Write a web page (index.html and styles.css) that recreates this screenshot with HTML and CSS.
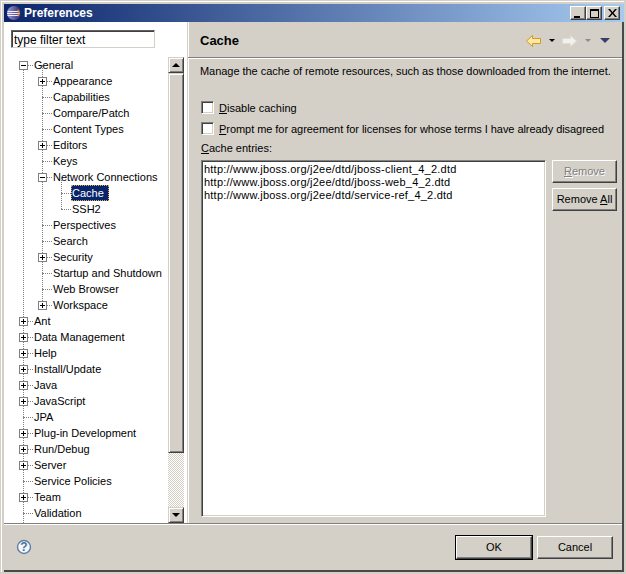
FILE: index.html
```html
<!DOCTYPE html>
<html lang="en">
<head>
    <meta charset="UTF-8">
    <meta name="viewport" content="width=device-width, initial-scale=1.0">
    <title>Preferences</title>
    <link rel="stylesheet" href="styles.css">
</head>
<body>
<div class="window">
    <!-- Title bar -->
    <div class="titlebar">
        <svg class="app-icon" width="16" height="16" viewBox="0 0 16 16">
            <defs>
                <linearGradient id="sphere" x1="0" y1="0" x2="1" y2="0">
                    <stop offset="0" stop-color="#9a98d8"/>
                    <stop offset="1" stop-color="#2a2868"/>
                </linearGradient>
            </defs>
            <circle cx="8" cy="8" r="7" fill="url(#sphere)"/>
            <path d="M1.500 6h11v1h-11zM1 8h12.500v1H1zM1.500 10h11v1h-11z" fill="#f2eefa"/>
            <path d="M13 4.500a7 7 0 0 1 0 7l-2-.5a7 7 0 0 0 0-6z" fill="#f3a53a" opacity=".6"/>
        </svg>
        <span class="titlebar-text">Preferences</span>
        <div class="win-buttons">
            <button class="win-btn"><span class="glyph-min"></span></button>
            <button class="win-btn"><span class="glyph-max"></span></button>
            <button class="win-btn win-close">
                <svg width="9" height="8" viewBox="0 0 9 8"><path d="M0 0h2l2.500 3L7 0h2L5.500 4 9 8H7L4.500 5 2 8H0l3.500-4z" fill="#000"/></svg>
            </button>
        </div>
    </div>

    <div class="panel">
        <div class="main">
            <!-- Left side with the filter and tree -->
            <div class="sidebar">
                <div class="filter-box">type filter text</div>
                <div class="tree-wrap">
                    <div class="tree-clip">
                        <ul class="tree tree-root">
                            <li><div class="row"><span class="box minus"></span><span class="item">General</span></div>
                                <ul class="tree tree-sub">
                                    <li><div class="row"><span class="box plus"></span><span class="item">Appearance</span></div></li>
                                    <li><div class="row"><span class="item">Capabilities</span></div></li>
                                    <li><div class="row"><span class="item">Compare/Patch</span></div></li>
                                    <li><div class="row"><span class="item">Content Types</span></div></li>
                                    <li><div class="row"><span class="box plus"></span><span class="item">Editors</span></div></li>
                                    <li><div class="row"><span class="item">Keys</span></div></li>
                                    <li><div class="row"><span class="box minus"></span><span class="item">Network Connections</span></div>
                                        <ul class="tree tree-sub">
                                            <li><div class="row"><span class="item selected">Cache</span></div></li>
                                            <li><div class="row"><span class="item">SSH2</span></div></li>
                                        </ul>
                                    </li>
                                    <li><div class="row"><span class="item">Perspectives</span></div></li>
                                    <li><div class="row"><span class="item">Search</span></div></li>
                                    <li><div class="row"><span class="box plus"></span><span class="item">Security</span></div></li>
                                    <li><div class="row"><span class="item">Startup and Shutdown</span></div></li>
                                    <li><div class="row"><span class="item">Web Browser</span></div></li>
                                    <li><div class="row"><span class="box plus"></span><span class="item">Workspace</span></div></li>
                                </ul>
                            </li>
                            <li><div class="row"><span class="box plus"></span><span class="item">Ant</span></div></li>
                            <li><div class="row"><span class="box plus"></span><span class="item">Data Management</span></div></li>
                            <li><div class="row"><span class="box plus"></span><span class="item">Help</span></div></li>
                            <li><div class="row"><span class="box plus"></span><span class="item">Install/Update</span></div></li>
                            <li><div class="row"><span class="box plus"></span><span class="item">Java</span></div></li>
                            <li><div class="row"><span class="box plus"></span><span class="item">JavaScript</span></div></li>
                            <li><div class="row"><span class="item">JPA</span></div></li>
                            <li><div class="row"><span class="box plus"></span><span class="item">Plug-in Development</span></div></li>
                            <li><div class="row"><span class="box plus"></span><span class="item">Run/Debug</span></div></li>
                            <li><div class="row"><span class="box plus"></span><span class="item">Server</span></div></li>
                            <li><div class="row"><span class="item">Service Policies</span></div></li>
                            <li><div class="row"><span class="box plus"></span><span class="item">Team</span></div></li>
                            <li><div class="row"><span class="item">Validation</span></div></li>
                        </ul>
                    </div>
                    <div class="scrollbar">
                        <div class="scroll-btn"><span class="arrow-up"></span></div>
                        <div class="scroll-thumb"></div>
                        <div class="scroll-track"></div>
                        <div class="scroll-btn"><span class="arrow-down"></span></div>
                    </div>
                </div>
            </div>

            <!-- Right side -->
            <div class="content">
                <div class="content-head">
                    <h1>Cache</h1>
                    <div class="nav-icons">
                        <svg width="15" height="12" viewBox="0 0 15 12"><path d="M.5 6 6.500.5v3h8v5h-8v3z" fill="#fde9a6" stroke="#d39a1c"/></svg>
                        <span class="drop drop-black"></span>
                        <svg width="15" height="12" viewBox="0 0 15 12"><path d="M14.500 6 8.500.5v3h-8v5h8v3z" fill="#f2f1ec" stroke="#dedcd5"/></svg>
                        <span class="drop drop-grey"></span>
                        <span class="drop-menu"></span>
                    </div>
                </div>
                <div class="content-body">
                    <p class="desc">Manage the cache of remote resources, such as those downloaded from the internet.</p>
                    <label class="check first"><span class="checkbox"></span><span><u>D</u>isable caching</span></label>
                    <label class="check"><span class="checkbox"></span><span class="check-long"><u>P</u>rompt me for agreement for licenses for whose terms I have already disagreed</span></label>
                    <div class="entries-label"><u>C</u>ache entries:</div>
                    <div class="entries">
                        <div class="listbox">
                            <div>http://www.jboss.org/j2ee/dtd/jboss-client_4_2.dtd</div>
                            <div>http://www.jboss.org/j2ee/dtd/jboss-web_4_2.dtd</div>
                            <div>http://www.jboss.org/j2ee/dtd/service-ref_4_2.dtd</div>
                        </div>
                        <div class="side-buttons">
                            <button class="btn disabled"><u>R</u>emove</button>
                            <button class="btn">Remove <u>A</u>ll</button>
                        </div>
                    </div>
                </div>
            </div>
        </div>

        <!-- Bottom bar -->
        <div class="footer">
            <svg class="help" width="16" height="16" viewBox="0 0 16 16">
                <circle cx="8" cy="8" r="6.500" fill="#f4f7fb" stroke="#5f7fa8" stroke-width="1.400"/>
                <text x="8" y="12" text-anchor="middle" class="help-q">?</text>
            </svg>
            <div class="footer-buttons">
                <button class="btn big default">OK</button>
                <button class="btn big">Cancel</button>
            </div>
        </div>
    </div>
</div>
</body>
</html>
```

FILE: styles.css
```css
* {
    box-sizing: border-box;
}
html, body {
    margin: 0;
    height: 100%;
}
body {
    font-family: "Liberation Sans", Arial, sans-serif;
    font-size: 11px;
    color: #000;
    background-color: #d4d0c8;
}
u {
    text-decoration: underline;
}

/* Window frame */
.window {
    width: 624px;
    height: 572px;
    display: flex;
    flex-direction: column;
    padding: 3px 0 0 3px;
    background-color: #d4d0c8;
    border-top: 1px solid #d4d0c8;
    border-left: 1px solid #d4d0c8;
    box-shadow: inset 1px 1px 0 #fff;
}
.titlebar {
    height: 18px;
    flex: none;
    display: flex;
    align-items: center;
    padding: 0 4px 0 2px;
    background: linear-gradient(to right, #0a246a, #a6caf0);
    color: #fff;
}
.app-icon {
    margin-right: 2px;
}
.titlebar-text {
    font-family: "Liberation Sans", Arial, sans-serif;
    font-weight: bold;
    font-size: 12px;
}
.win-buttons {
    margin-left: auto;
    display: flex;
}
.win-btn {
    width: 16px;
    height: 14px;
    padding: 0;
    display: flex;
    align-items: center;
    justify-content: center;
    background-color: #d4d0c8;
    border: 1px solid;
    border-color: #fff #404040 #404040 #fff;
    box-shadow: inset -1px -1px 0 #808080;
}
.win-close {
    margin-left: 2px;
}
.glyph-min {
    width: 6px;
    height: 2px;
    background-color: #000;
    margin-top: 7px;
    margin-right: 2px;
}
.glyph-max {
    width: 9px;
    height: 9px;
    border: 1px solid #000;
    border-top-width: 2px;
}

/* Everything under the title bar, dark edge right and bottom */
.panel {
    flex: 1;
    min-height: 0;
    display: flex;
    flex-direction: column;
    border-right: 2px solid #484848;
    border-bottom: 2px solid #484848;
}
.main {
    flex: 1;
    display: flex;
    min-height: 0;
    border-bottom: 1px solid #808080;
    box-shadow: 0 1px 0 #fff;
}

/* Left side */
.sidebar {
    width: 183px;
    flex: none;
    display: flex;
    flex-direction: column;
    background-color: #fff;
    padding-top: 8px;
}
.filter-box {
    width: 144px;
    height: 18px;
    margin-left: 7px;
    padding: 2px 2px 0;
    font-size: 12px;
    line-height: 15px;
    background-color: #fff;
    border: 1px solid;
    border-color: #606060 #d4d0c8 #d4d0c8 #606060;
    box-shadow: inset 1px 1px 0 #404040;
}
.tree-wrap {
    flex: 1;
    display: flex;
    min-height: 0;
    margin-top: 9px;
}
.tree-clip {
    flex: 1;
    overflow: hidden;
    position: relative;
}
.tree {
    list-style: none;
    margin: 0;
    padding: 0;
    position: relative;
}
/* vertical dotted line of each level */
.tree::before {
    content: "";
    position: absolute;
    left: 0;
    top: 8px;
    bottom: 8px;
    border-left: 1px dotted #808080;
}
.tree-root {
    margin-left: 19px;
}
.tree-root::before {
    bottom: -20px;
}
.tree-sub {
    margin-left: 19px;
}
.tree-sub::before {
    top: -8px;
}
.row {
    height: 16px;
    display: flex;
    align-items: center;
    position: relative;
    padding-left: 10px;
}
.row::before {
    content: "";
    position: absolute;
    left: 0;
    top: 8px;
    width: 10px;
    border-top: 1px dotted #808080;
}
.box {
    position: absolute;
    left: -4px;
    top: 4px;
    width: 9px;
    height: 9px;
    background-color: #fff;
    border: 1px solid #808080;
    z-index: 1;
}
.box::before {
    content: "";
    position: absolute;
    left: 1px;
    top: 3px;
    width: 5px;
    height: 1px;
    background-color: #000;
}
.plus::after {
    content: "";
    position: absolute;
    left: 3px;
    top: 1px;
    width: 1px;
    height: 5px;
    background-color: #000;
}
.item {
    padding: 0 1px;
    line-height: 16px;
    white-space: nowrap;
    position: relative;
}
.selected {
    padding-right: 5px;
    background-color: #0a246a;
    color: #fff;
    outline: 1px dotted #d8b060;
    outline-offset: -1px;
}

/* Scrollbar */
.scrollbar {
    width: 16px;
    flex: none;
    margin-right: 3px;
    display: flex;
    flex-direction: column;
}
.scroll-btn {
    height: 16px;
    flex: none;
    display: flex;
    align-items: center;
    justify-content: center;
    background-color: #d4d0c8;
    border: 1px solid;
    border-color: #d4d0c8 #404040 #404040 #d4d0c8;
    box-shadow: inset 1px 1px 0 #fff, inset -1px -1px 0 #808080;
}
.arrow-up, .arrow-down {
    width: 0;
    height: 0;
    border-left: 4px solid transparent;
    border-right: 4px solid transparent;
}
.arrow-up {
    border-bottom: 4px solid #000;
}
.arrow-down {
    border-top: 4px solid #000;
}
.scroll-thumb {
    height: 380px;
    flex: none;
    background-color: #d4d0c8;
    border: 1px solid;
    border-color: #d4d0c8 #404040 #404040 #d4d0c8;
    box-shadow: inset 1px 1px 0 #fff, inset -1px -1px 0 #808080;
}
.scroll-track {
    flex: 1;
    background-color: #fff;
    background-image: conic-gradient(#d4d0c8 25%, #fff 0 50%, #d4d0c8 0 75%, #fff 0);
    background-size: 2px 2px;
}

/* Right side */
.content {
    flex: 1;
    min-width: 0;
    display: flex;
    flex-direction: column;
    border-left: 1px solid #d4d0c8;
    box-shadow: inset 1px 0 0 #fff;
}
.content-head {
    height: 36px;
    flex: none;
    display: flex;
    align-items: center;
    padding: 2px 12px 0 12px;
    border-bottom: 1px solid #808080;
    box-shadow: 0 1px 0 #fff;
}
h1 {
    margin: 0;
    font-size: 13px;
    font-weight: bold;
}
.nav-icons {
    margin-left: auto;
    display: flex;
    align-items: center;
}
.drop {
    width: 0;
    height: 0;
    margin: 0 7px 0 8px;
    border-left: 3px solid transparent;
    border-right: 3px solid transparent;
    border-top: 3px solid #000;
}
.drop-grey {
    border-top-color: #8a8a8a;
}
.drop-menu {
    width: 0;
    height: 0;
    margin-left: 2px;
    border-left: 5px solid transparent;
    border-right: 5px solid transparent;
    border-top: 5px solid #3f3a6e;
}
.content-body {
    flex: 1;
    display: flex;
    flex-direction: column;
    min-height: 0;
    padding: 0 5px 6px 13px;
}
.desc {
    margin: 6px 0 0 -1px;
    line-height: 14px;
    white-space: nowrap;
    letter-spacing: -0.04px;
}
.check {
    display: flex;
    align-items: center;
    gap: 5px;
    height: 13px;
    margin-top: 8px;
    white-space: nowrap;
}
.check.first {
    margin-top: 23px;
}
.check-long {
    letter-spacing: -0.05px;
}
.checkbox {
    width: 13px;
    height: 13px;
    flex: none;
    background-color: #fff;
    border: 1px solid;
    border-color: #808080 #fff #fff #808080;
    box-shadow: inset 1px 1px 0 #404040, inset -1px -1px 0 #d4d0c8;
}
.entries-label {
    margin-top: 6px;
    line-height: 14px;
}
.entries {
    flex: 1;
    display: flex;
    min-height: 0;
    margin-top: 5px;
    gap: 6px;
}
.listbox {
    flex: 1;
    padding: 2px 2px;
    background-color: #fff;
    line-height: 13px;
    letter-spacing: 0.22px;
    border: 1px solid;
    border-color: #808080 #fff #fff #808080;
    box-shadow: inset 1px 1px 0 #404040, inset -1px -1px 0 #d4d0c8;
    white-space: nowrap;
}
.side-buttons {
    width: 65px;
    flex: none;
    display: flex;
    flex-direction: column;
    gap: 5px;
}
.side-buttons .btn {
    padding-bottom: 2px;
}
.btn {
    height: 23px;
    padding: 0;
    font-family: inherit;
    font-size: 11px;
    color: #000;
    background-color: #d4d0c8;
    border: 1px solid;
    border-color: #fff #404040 #404040 #fff;
    box-shadow: inset -1px -1px 0 #808080;
}
.btn.disabled {
    color: #808080;
    text-shadow: 1px 1px 0 #fff;
}

/* Bottom bar */
.footer {
    height: 46px;
    flex: none;
    display: flex;
    align-items: center;
    justify-content: space-between;
    padding: 0 9px 0 12px;
}
.help-q {
    font-family: "Liberation Sans", Arial, sans-serif;
    font-size: 12px;
    font-weight: bold;
    fill: #4f6f98;
}
.footer-buttons {
    display: flex;
    gap: 5px;
}
.btn.big {
    width: 76px;
}
.btn.default {
    outline: 1px solid #000;
    outline-offset: 0;
}
```
